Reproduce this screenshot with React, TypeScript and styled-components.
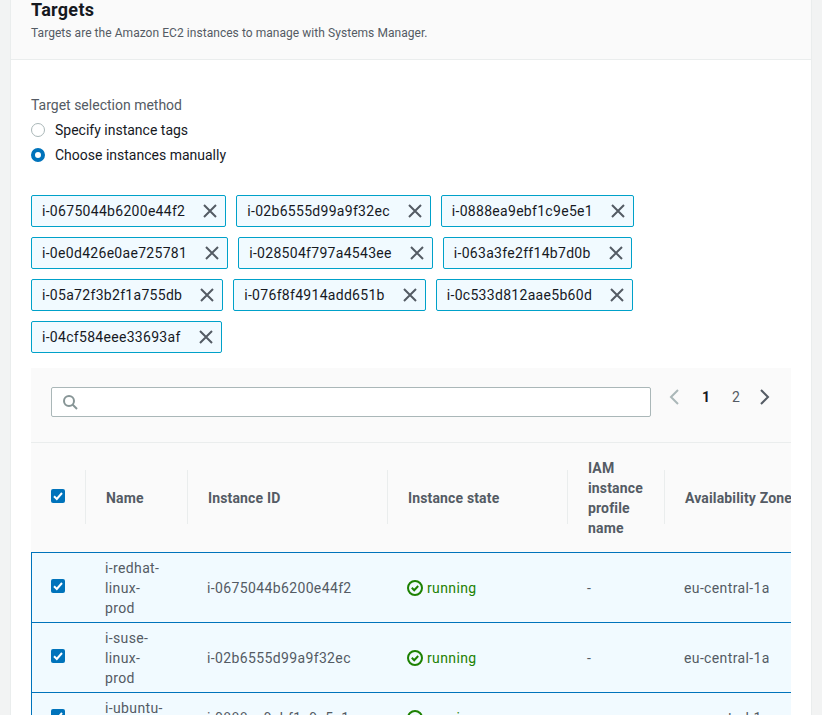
import React from "react";
import styled, { createGlobalStyle } from "styled-components";

const Global = createGlobalStyle`
  html, body { margin: 0; padding: 0; height: 715px; overflow: hidden; background: #f2f3f3; }
  body { font-family: Roboto, "Noto Sans", sans-serif; font-size: 14px; line-height: 20px; color: #16191f; }
  * { box-sizing: border-box; }
`;
const Page = styled.div`
  height: 715px; overflow: hidden; padding: 0 11px;
`;
const Card = styled.section`
  background: #fff; border-left: 1px solid #eaeded; border-right: 1px solid #eaeded; margin-left: -1px; width: 802px; height: 715px; overflow: hidden;
`;
const Header = styled.header`
  height: 60px; background: #fafafa; border-bottom: 1px solid #eaeded; padding: 0 20px;
`;
const Title = styled.h2`
  margin: 0; font-size: 18px; line-height: 20px; font-weight: 700; color: #16191f; letter-spacing: 0.3px;
`;
const Desc = styled.p`
  margin: 3px 0 0; font-size: 12px; line-height: 20px; color: #545b64; letter-spacing: 0.05px;
`;
const Body = styled.div`
  padding: 35px 20px 0;
`;
const Label = styled.div`
  font-size: 14px; line-height: 20px; color: #545b64; margin-bottom: 2px;
`;
const RadioRow = styled.label`
  display: flex; align-items: center; height: 25px; gap: 10px;
`;
const RadioDot = styled.span<{ $on?: boolean }>`
  width: 14px; height: 14px; border-radius: 50%;
  border: ${(p) => (p.$on ? "4px solid #0073bb" : "1px solid #aab7b8")};
  background: #fff; flex: none;
`;
const Tokens = styled.div`
  display: flex; flex-wrap: wrap; gap: 10px; margin-top: 28px; width: 760px;
`;
const Token = styled.div`
  display: flex; align-items: center; height: 32px; padding: 0 8px 0 10px; gap: 18px;
  background: #f1faff; border: 1px solid #00a1c9; border-radius: 2px; color: #16191f; letter-spacing: 0.3px;
`;
const TableWrap = styled.div`
  margin-top: 15px; width: 760px; background: #fafafa; overflow: hidden;
`;
const Tools = styled.div`
  height: 75px; border-bottom: 1px solid #eaeded; padding: 19px 20px 0; display: flex; align-items: flex-start;
`;
const Search = styled.div`
  flex: none; width: 600px; height: 30px; background: #fff; border: 1px solid #aab7b8; border-radius: 2px; display: flex; align-items: center; padding-left: 10px;
`;
const Pager = styled.div`
  flex: none; display: flex; align-items: center; height: 20px; margin-left: 14px; color: #545b64; font-size: 14px;
`;
const PageNums = styled.div`
  display: flex; margin: 0 3px 0 6px;
`;
const PageNum = styled.span<{ $on?: boolean }>`
  width: 30px; text-align: center; font-weight: ${(p) => (p.$on ? 700 : 400)}; color: ${(p) => (p.$on ? "#16191f" : "#545b64")};
`;
const Table = styled.table`
  border-collapse: separate; border-spacing: 0; table-layout: fixed; width: 933px;
`;
const Th = styled.th`
  height: 109px; padding: 0; font-weight: 700; text-align: left; color: #545b64; font-size: 14px; letter-spacing: 0.15px;
`;
const HeadLabel = styled.div<{ $divider?: boolean }>`
  padding: 0 20px 0 ${(p) => (p.$divider ? 21 : 20)}px; height: 109px; display: flex; align-items: center; position: relative;
  &::before {
    content: ""; position: absolute; left: 0; top: 27px; width: 1px; height: 54px; background: ${(p) => (p.$divider ? "#eaeded" : "transparent")};
  }
`;
const Td = styled.td<{ $first?: boolean }>`
  padding: 5px 20px 4px; background: #f1faff; color: #545b64; font-size: 14px; letter-spacing: 0.37px;
  border-top: 1px solid #0073bb; vertical-align: middle;
  ${(p) => (p.$first ? "border-left: 1px solid #0073bb; padding-left: 19px;" : "")}
`;
const CheckBox = styled.span`
  display: block; width: 14px; height: 14px; border-radius: 2px; background: #0073bb; position: relative; margin-bottom: 4px;
  svg { position: absolute; left: 0; top: 0; }
`;
const Running = styled.span`
  display: flex; align-items: center; gap: 4px; color: #1d8102;
`;
const Check = () => (
  <CheckBox>
    <svg width="14" height="14" viewBox="0 0 14 14"><path d="M3 7.2l2.8 2.8L11 4" fill="none" stroke="#fff" strokeWidth="2" /></svg>
  </CheckBox>
);
const XIcon = () => (
  <svg width="14" height="14" viewBox="0 0 14 14"><path d="M1 1l12 12M13 1L1 13" stroke="#545b64" strokeWidth="2" fill="none" /></svg>
);
const Status = () => (
  <svg width="16" height="16" viewBox="0 0 16 16" fill="none" stroke="#1d8102" strokeWidth="2"><circle cx="8" cy="8" r="7" /><path d="M4.8 7.8l2.4 2.4 4-4.2" /></svg>
);
const ids = ["i-0675044b6200e44f2","i-02b6555d99a9f32ec","i-0888ea9ebf1c9e5e1","i-0e0d426e0ae725781","i-028504f797a4543ee","i-063a3fe2ff14b7d0b","i-05a72f3b2f1a755db","i-076f8f4914add651b","i-0c533d812aae5b60d","i-04cf584eee33693af"];
const rows = [["i-redhat-linux-prod",ids[0]],["i-suse-linux-prod",ids[1]],["i-ubuntu-prod",ids[2]]];
const cols: [string, number][] = [["Name",102],["Instance ID",200],["Instance state",180],["IAM instance profile name",97],["Availability Zone",300]];

export default function App() {
  return (
    <Page>
      <Global />
      <Card>
        <Header>
          <Title>Targets</Title>
          <Desc>Targets are the Amazon EC2 instances to manage with Systems Manager.</Desc>
        </Header>
        <Body>
          <Label>Target selection method</Label>
          <RadioRow><RadioDot />Specify instance tags</RadioRow>
          <RadioRow><RadioDot $on />Choose instances manually</RadioRow>
          <Tokens>
            {ids.map((id) => <Token key={id}>{id}<XIcon /></Token>)}
          </Tokens>
          <TableWrap>
            <Tools>
              <Search>
                <svg width="16" height="16" viewBox="0 0 16 16" fill="none" stroke="#879596" strokeWidth="2"><circle cx="7" cy="7" r="5" /><path d="M10.5 10.5L15 15" /></svg>
              </Search>
              <Pager>
                <svg width="20" height="20" viewBox="0 0 20 20" fill="none" stroke="#aab7b8" strokeWidth="2"><path d="M13 3l-7 7 7 7" /></svg>
                <PageNums>
                  <PageNum $on>1</PageNum>
                  <PageNum>2</PageNum>
                </PageNums>
                <svg width="20" height="20" viewBox="0 0 20 20" fill="none" stroke="#545b64" strokeWidth="2"><path d="M7 3l7 7-7 7" /></svg>
              </Pager>
            </Tools>
            <Table>
              <colgroup><col style={{ width: 54 }} />{cols.map(([c, w]) => <col key={c} style={{ width: w }} />)}</colgroup>
              <thead>
                <tr>
                  <Th><HeadLabel><Check /></HeadLabel></Th>
                  {cols.map(([c]) => <Th key={c}><HeadLabel $divider>{c}</HeadLabel></Th>)}
                </tr>
              </thead>
              <tbody>
                {rows.map(([n, id]) => (
                  <tr key={id}>
                    <Td $first><Check /></Td>
                    <Td>{n}</Td>
                    <Td>{id}</Td>
                    <Td><Running><Status />running</Running></Td>
                    <Td>-</Td>
                    <Td>eu-central-1a</Td>
                  </tr>
                ))}
              </tbody>
            </Table>
          </TableWrap>
        </Body>
      </Card>
    </Page>
  );
}
